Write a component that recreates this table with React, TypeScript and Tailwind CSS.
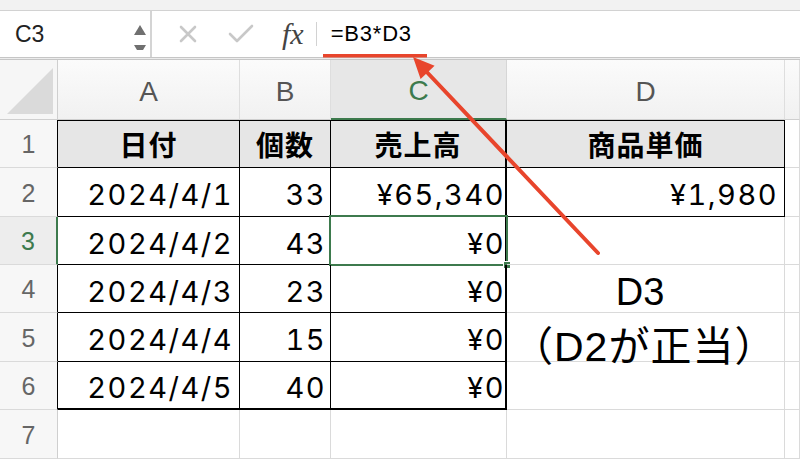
import React from 'react';

type Cell = {
  text?: string;
  cls: string;
  bold?: boolean;
  align?: 'left' | 'right' | 'center';
};

const gray = 'border-r border-b border-r-[#dadada] border-b-[#dadada]';

const rowHeights = ['h-[48px]', 'h-[49px]', 'h-[48px]', 'h-[48px]', 'h-[49px]', 'h-[48px]', 'h-[49px]'];

// right padding per column (A, B, C, D, E)
const padRight = ['pr-[6px]', 'pr-[4px]', 'pr-0', 'pr-[6px]', 'pr-0'];

const rows: Cell[][] = [
  [
    { text: '日付', bold: true, align: 'center', cls: 'border-t border-r border-b border-black bg-[#e6e6e6]' },
    { text: '個数', bold: true, align: 'center', cls: 'border-t border-r border-b border-black bg-[#e6e6e6]' },
    { text: '売上高', bold: true, align: 'center', cls: 'border-t border-b border-r-2 border-black bg-[#e6e6e6]' },
    { text: '商品単価', bold: true, align: 'center', cls: 'border-t border-r border-b border-black bg-[#e6e6e6]' },
    { cls: gray },
  ],
  [
    { text: '2024/4/1', align: 'right', cls: 'border-r border-b border-black' },
    { text: '33', align: 'right', cls: 'border-r border-b border-black' },
    { text: '¥65,340', align: 'right', cls: 'border-b border-r-2 border-black' },
    { text: '¥1,980', align: 'right', cls: 'border-r border-b border-black' },
    { cls: gray },
  ],
  [
    { text: '2024/4/2', align: 'right', cls: 'border-r border-b border-black' },
    { text: '43', align: 'right', cls: 'border-r border-b border-black' },
    { text: '¥0', align: 'right', cls: 'border-b border-r-2 border-black' },
    { cls: gray },
    { cls: gray },
  ],
  [
    { text: '2024/4/3', align: 'right', cls: 'border-r border-b border-black' },
    { text: '23', align: 'right', cls: 'border-r border-b border-black' },
    { text: '¥0', align: 'right', cls: 'border-b border-r-2 border-black' },
    { cls: gray },
    { cls: gray },
  ],
  [
    { text: '2024/4/4', align: 'right', cls: 'border-r border-b border-black' },
    { text: '15', align: 'right', cls: 'border-r border-b border-black' },
    { text: '¥0', align: 'right', cls: 'border-b border-r-2 border-black' },
    { cls: gray },
    { cls: gray },
  ],
  [
    { text: '2024/4/5', align: 'right', cls: 'border-r border-b-2 border-black' },
    { text: '40', align: 'right', cls: 'border-r border-b-2 border-black' },
    { text: '¥0', align: 'right', cls: 'border-b-2 border-r-2 border-black' },
    { cls: gray },
    { cls: gray },
  ],
  [{ cls: gray }, { cls: gray }, { cls: gray }, { cls: gray }, { cls: gray }],
];

const columns = ['A', 'B', 'C', 'D', ''];

function FormulaBar() {
  return (
    <div className="flex h-[46px] bg-white">
      <div className="w-[152px] flex items-center justify-between pl-[15px] pr-[3px] border-r-2 border-[#d4d4d4]">
        <span className="text-[23px] text-[#222] leading-none">C3</span>
        <svg width="14" height="32" viewBox="0 0 14 32">
          <polygon points="1,17 13,17 7,7" fill="#707070" />
          <polygon points="1,27 13,27 7,37" fill="#707070" />
        </svg>
      </div>
      <div className="flex items-center pl-[26px]">
        <svg width="20" height="20" viewBox="0 0 20 20">
          <path d="M3 3 L17 17 M17 3 L3 17" stroke="#c8c8c8" strokeWidth="2.6" strokeLinecap="round" />
        </svg>
        <svg width="26" height="20" viewBox="0 0 26 20" className="ml-[30px]">
          <path d="M2 10 L9 17 L24 2" stroke="#c8c8c8" strokeWidth="2.6" fill="none" strokeLinecap="round" strokeLinejoin="round" />
        </svg>
        <span className="ml-[28px] font-['Liberation_Serif',serif] italic text-[30px] text-[#444] leading-none">fx</span>
        <div className="ml-[12px] w-px h-[24px] bg-[#d2d2d2]" />
        <span className="ml-[14px] text-[22px] tracking-[0.8px] text-black leading-none">=B3*D3</span>
      </div>
    </div>
  );
}

export default function App() {
  return (
    <div className="relative w-[800px] h-[466px] overflow-hidden bg-white font-['Liberation_Sans','Noto_Sans_CJK_JP',sans-serif]">
      <div className="h-[11px] bg-[#f2f2f2] border-b border-[#d2d2d2]" />
      <FormulaBar />
      <div className="h-[3px] bg-[#ececec] border-y border-[#c6c6c6]" />

      <div className="grid grid-cols-[58px_182px_91px_176px_278px_15px]">
        {/* column headers */}
        <div className="h-[60px] border-r border-b border-[#cfcfcf] bg-[#f6f6f6] flex items-end justify-end pr-[4px] pb-[5px]">
          <svg width="46" height="46" viewBox="0 0 46 46">
            <polygon points="0,46 46,46 46,0" fill="#dadada" />
          </svg>
        </div>
        {columns.map((c) =>
          c === 'C' ? (
            <div
              key={c}
              className="h-[60px] border-r border-r-[#d6d6d6] border-b-2 border-b-[#3d7a4d] bg-[#e7e7e7] flex items-center justify-center pt-[4px] text-[28px] text-[#3d7a4d] font-light"
            >
              {c}
            </div>
          ) : (
            <div
              key={c || 'E'}
              className="h-[60px] border-r border-b border-r-[#dedede] border-b-[#cfcfcf] bg-gradient-to-b from-[#fbfbfb] to-[#f1f1f1] flex items-center justify-center pt-[4px] text-[28px] text-[#555] font-light"
            >
              {c}
            </div>
          )
        )}

        {rows.map((row, r) => {
          const h = rowHeights[r];
          const selected = r === 2;
          const inTable = r < 6;
          return (
            <React.Fragment key={r}>
              <div
                className={
                  selected
                    ? `${h} border-b border-b-[#dadada] border-r-2 border-r-[#3d7a4d] bg-[#ededed] flex items-center justify-center pt-[3px] text-[25px] text-[#3d7a4d]`
                    : inTable
                    ? `${h} border-b border-b-[#dadada] border-r border-r-black bg-[#f7f7f7] flex items-center justify-center pt-[3px] text-[25px] text-[#666]`
                    : `${h} border-b border-b-[#dadada] border-r border-r-[#cfcfcf] bg-[#f7f7f7] flex items-center justify-center pt-[3px] text-[25px] text-[#666]`
                }
              >
                {r + 1}
              </div>
              {row.map((cell, ci) => (
                <div
                  key={ci}
                  className={`${h} ${cell.cls} relative flex items-center pt-[5px] text-black leading-none ${
                    cell.align === 'center' ? 'justify-center' : `justify-end ${padRight[ci]}`
                  } ${
                    cell.bold
                      ? 'font-bold text-[28px] tracking-[1px]'
                      : "font-['Inter','Noto_Sans_CJK_JP',sans-serif] text-[29px] tracking-[1.5px] tabular-nums"
                  }`}
                >
                  {cell.text}
                  {selected && ci === 2 && (
                    <div className="absolute left-[-2px] top-[-2px] right-[-3px] bottom-[-2px] border-2 border-[#3d7a4d]">
                      <div className="absolute right-[-5px] bottom-[-5px] w-[8px] h-[8px] bg-[#3d7a4d] border border-white" />
                    </div>
                  )}
                </div>
              ))}
            </React.Fragment>
          );
        })}
      </div>

      {/* annotation text box */}
      <div className="absolute left-[512px] top-[269px] w-[256px] flex flex-col items-center text-black">
        <span className="text-[38px] leading-[46px]">D3</span>
        <span className="mt-[9px] text-[41px] leading-[46px] tracking-[1px]">（D2が正当）</span>
      </div>

      {/* red marker and arrow */}
      <svg className="absolute inset-0 pointer-events-none" width="800" height="466" viewBox="0 0 800 466">
        <rect x="323" y="54" width="104" height="3.5" fill="#e8452c" />
        <line x1="598" y1="253" x2="423" y2="68" stroke="#e8452c" strokeWidth="4" strokeLinecap="round" />
        <polygon points="413,57 420.6,79 434.6,65.8" fill="#e8452c" />
      </svg>
    </div>
  );
}
